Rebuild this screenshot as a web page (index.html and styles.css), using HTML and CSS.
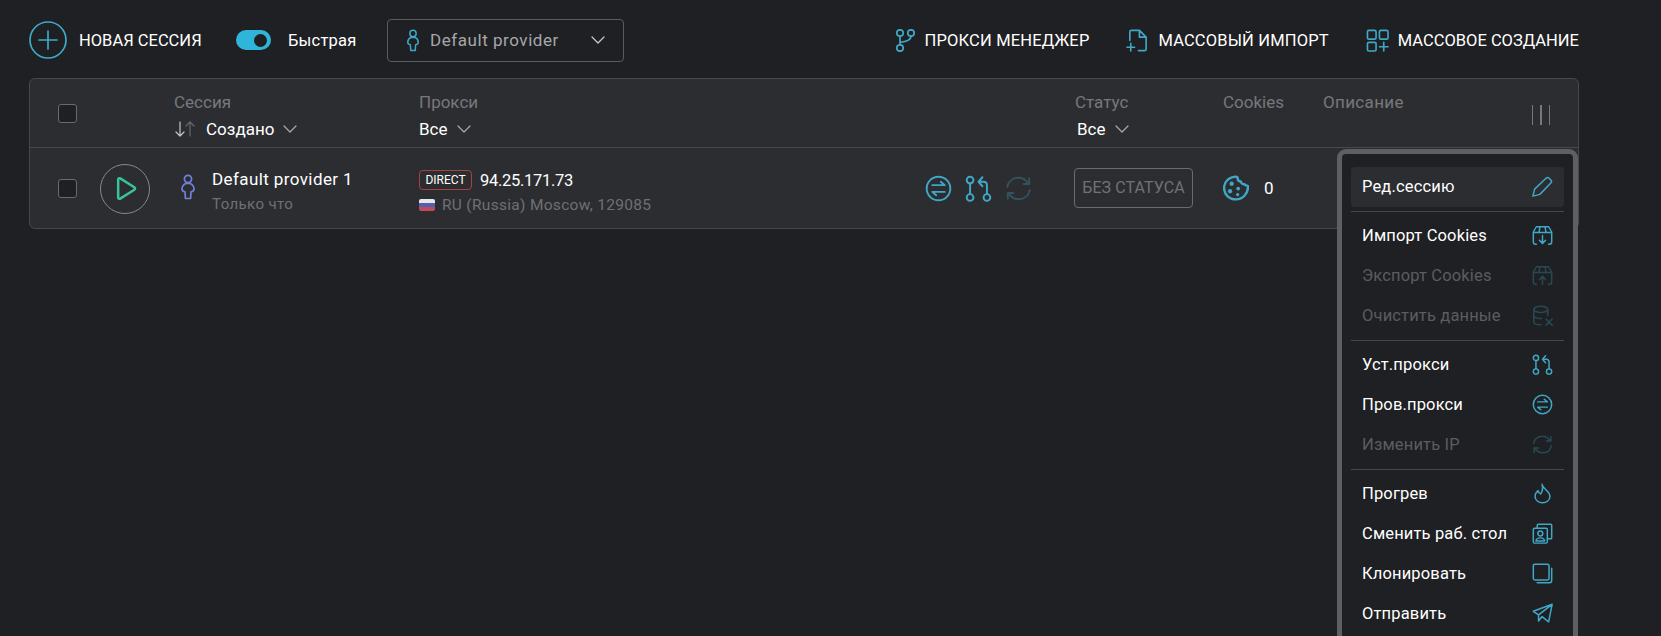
FILE: index.html
```html
<!DOCTYPE html>
<html lang="en">
<head>
    <meta charset="UTF-8">
    <meta name="viewport" content="width=device-width, initial-scale=1.0">
    <title>Sessions</title>
    <link rel="stylesheet" href="styles.css">
</head>
<body>
    <svg class="sprite" width="0" height="0">
        <symbol id="i-person" viewBox="0 0 16 26"><circle cx="8" cy="5" r="3.6"/><path d="M5.6 9.5h4.8c2.2 1.2 3.6 3.4 3.6 5.6 0 1.6-1 2.6-3 2.8l-.4 6.6H5.4L5 17.900c-2-.2-3-1.200-3-2.800 0-2.200 1.400-4.400 3.600-5.600z"/></symbol>
        <symbol id="i-chevron" viewBox="0 0 14 8"><path d="M1 1l6 6 6-6"/></symbol>
        <symbol id="i-check" viewBox="0 0 24 24"><circle cx="12" cy="12" r="10.500"/><path d="M6.500 9h11l-3.500-3M17.500 15h-11l3.500 3"/></symbol>
        <symbol id="i-pull" viewBox="0 0 24 24"><circle cx="4.500" cy="4.500" r="3"/><circle cx="4.500" cy="20" r="3"/><circle cx="19.500" cy="20" r="3"/><path d="M4.500 7.500V17M19.500 17V9c0-2-1-3-3-3H12M15.500 2l-3.500 4 3.500 4"/></symbol>
        <symbol id="i-refresh" viewBox="0 0 24 24"><path d="M2 10.500C3 5.500 7 2.500 12 2.500c3.800 0 6.800 2 8.500 5M22 13.500c-1 5-5 8-10 8-3.800 0-6.800-2-8.500-5"/><path d="M21.500 3v5h-5M2.500 21v-5h5"/></symbol>
        <symbol id="i-box-down" viewBox="0 0 24 24"><path d="M5 22H4c-1.500 0-2.500-1-2.500-2.500V8L5 2h14l3.500 6v11.500c0 1.500-1 2.500-2.500 2.500h-1M1.500 8.500h21M9 2.500L8 8.500M15 2.500l1 6M12 12v9M8.500 17.500L12 21l3.500-3.500"/></symbol>
        <symbol id="i-box-up" viewBox="0 0 24 24"><path d="M5 22H4c-1.500 0-2.500-1-2.500-2.500V8L5 2h14l3.500 6v11.500c0 1.500-1 2.500-2.500 2.500h-1M1.500 8.500h21M9 2.500L8 8.500M15 2.500l1 6M12 22v-9M8.500 16.500L12 13l3.500 3.500"/></symbol>
    </svg>

    <header class="toolbar">
        <div class="toolbar-left">
            <button class="new-session">
                <svg class="icon-plus" viewBox="0 0 38 38"><circle cx="19" cy="19" r="18"/><path d="M19 10v18M10 19h18"/></svg>
                <span>НОВАЯ СЕССИЯ</span>
            </button>
            <div class="toggle"><span class="toggle-knob"></span></div>
            <span class="toggle-label">Быстрая</span>
            <div class="provider-select">
                <svg class="icon-person-sm"><use href="#i-person"/></svg>
                <span class="provider-name">Default provider</span>
                <svg class="chevron chevron-lg"><use href="#i-chevron"/></svg>
            </div>
        </div>
        <nav class="toolbar-right">
            <a class="tool-link link-proxy">
                <svg class="icon" viewBox="0 0 23 23"><circle cx="5" cy="4" r="3.200"/><circle cx="16" cy="4" r="3.200"/><circle cx="5" cy="19" r="3.200"/><path d="M5 7.200V15.800M16 7.200c0 3.800-3.500 5.300-11 6.300"/></svg>
                <span>ПРОКСИ МЕНЕДЖЕР</span>
            </a>
            <a class="tool-link link-import">
                <svg class="icon" viewBox="0 0 24 24"><path d="M4 12V3c0-1 .5-1.500 1.500-1.500H14l7 7V21c0 1-.5 1.500-1.500 1.500H13M14 1.500V8.500h7M5 15v8M1 19h8"/></svg>
                <span>МАССОВЫЙ ИМПОРТ</span>
            </a>
            <a class="tool-link link-create">
                <svg class="icon" viewBox="0 0 24 24"><rect x="1.500" y="1.500" width="9" height="9" rx="1.500"/><rect x="14" y="1.500" width="9" height="9" rx="1.500"/><rect x="1.500" y="14" width="9" height="9" rx="1.500"/><path d="M18.500 14v9M14 18.500h9"/></svg>
                <span>МАССОВОЕ СОЗДАНИЕ</span>
            </a>
        </nav>
    </header>

    <section class="table">
        <div class="grid-row table-head">
            <span class="checkbox"></span>
            <span></span>
            <div class="head-cell">
                <span class="head-title">Сессия</span>
                <div class="head-filter">
                    <svg class="sort-icon" viewBox="0 0 22 16"><path d="M6 1v14M2 11l4 4 4-4"/><path class="sort-off" d="M16 15V1M12 5l4-4 4 4"/></svg>
                    <span>Создано</span>
                    <svg class="chevron"><use href="#i-chevron"/></svg>
                </div>
            </div>
            <div class="head-cell">
                <span class="head-title">Прокси</span>
                <div class="head-filter"><span>Все</span><svg class="chevron"><use href="#i-chevron"/></svg></div>
            </div>
            <div class="head-cell head-status">
                <span class="head-title">Статус</span>
                <div class="head-filter"><span>Все</span><svg class="chevron"><use href="#i-chevron"/></svg></div>
            </div>
            <div class="head-cell"><span class="head-title">Cookies</span></div>
            <div class="head-cell head-last">
                <span class="head-title">Описание</span>
                <div class="columns-btn"><i></i><i></i><i></i></div>
            </div>
        </div>

        <div class="grid-row table-row">
            <span class="checkbox"></span>
            <button class="play">
                <svg viewBox="0 0 20 24"><path d="M2 3.500c0-1.200 1-1.800 2-1.200l13.500 8.500c1 .6 1 1.800 0 2.400L4 21.700c-1 .6-2 0-2-1.200z"/></svg>
            </button>
            <div class="session-cell">
                <svg class="icon-person"><use href="#i-person"/></svg>
                <div>
                    <div class="session-name">Default provider 1</div>
                    <div class="session-time">Только что</div>
                </div>
            </div>
            <div class="proxy-cell">
                <div class="proxy-info">
                    <div class="proxy-top"><span class="badge">DIRECT</span><span class="proxy-ip">94.25.171.73</span></div>
                    <div class="proxy-geo"><span class="flag"></span>RU (Russia) Moscow, 129085</div>
                </div>
                <div class="proxy-actions">
                    <svg class="icon-action"><use href="#i-check"/></svg>
                    <svg class="icon-action"><use href="#i-pull"/></svg>
                    <svg class="icon-action dim"><use href="#i-refresh"/></svg>
                </div>
            </div>
            <div><span class="status-box">БЕЗ СТАТУСА</span></div>
            <div class="cookies-cell">
                <svg class="icon-cookie" viewBox="0 0 24 24"><path d="M12 1.500c1 0 1.500.5 1.500 1.500 0 2 1.500 3 3 3 .3 1.700 1.700 2.800 3.300 2.500.7 1 2.700 1.500 3.200 1.500.6 6.500-4.500 12.500-11 12.500S1 17.800 1 12 6 1.500 12 1.500z"/><circle class="dot" cx="8" cy="8" r="2"/><circle class="dot" cx="6.500" cy="15" r="2"/><circle class="dot" cx="14" cy="12.500" r="1.700"/><circle class="dot" cx="13.500" cy="18" r="1.500"/></svg>
                <span>0</span>
            </div>
            <span></span>
        </div>
    </section>

    <!-- context menu, runs past the bottom of the window -->
    <div class="menu">
        <div class="menu-item active">Ред.сессию
            <svg class="menu-icon" viewBox="0 0 24 24"><path d="M1 23l2-8L16 2.500c1-1 2.500-1 3.500 0l2 2c1 1 1 2.500 0 3.500L9 21z"/></svg>
        </div>
        <hr class="menu-sep">
        <div class="menu-item">Импорт Cookies <svg class="menu-icon"><use href="#i-box-down"/></svg></div>
        <div class="menu-item off">Экспорт Cookies <svg class="menu-icon"><use href="#i-box-up"/></svg></div>
        <div class="menu-item off">Очистить данные
            <svg class="menu-icon" viewBox="0 0 24 24"><ellipse cx="10" cy="5" rx="8" ry="3.500"/><path d="M2 5v14c0 2 3.500 3.500 8 3.500M18 5v7M2 12c0 2 3.500 3.500 9 3.500M16 16l7 7M23 16l-7 7"/></svg>
        </div>
        <hr class="menu-sep">
        <div class="menu-item">Уст.прокси <svg class="menu-icon"><use href="#i-pull"/></svg></div>
        <div class="menu-item">Пров.прокси <svg class="menu-icon"><use href="#i-check"/></svg></div>
        <div class="menu-item off">Изменить IP <svg class="menu-icon"><use href="#i-refresh"/></svg></div>
        <hr class="menu-sep">
        <div class="menu-item">Прогрев
            <svg class="menu-icon" viewBox="0 0 24 24"><path d="M11.500 1.500c0 4.500 9 7.500 9 14 0 4.200-3.800 7-8.500 7s-8.500-2.800-8.500-7c0-3 1.500-5.200 3.500-6.800.3 2 1.300 3.300 3 3.800 1.800-2.500 2.500-7 1.500-11z"/></svg>
        </div>
        <div class="menu-item">Сменить раб. стол
            <svg class="menu-icon" viewBox="0 0 24 24"><rect x="1.500" y="6" width="16" height="17" rx="1.500"/><path d="M6 6V2.500c0-.7.5-1 1-1h14.500c.7 0 1 .4 1 1V17c0 .7-.4 1-1 1h-4"/><circle cx="9.500" cy="12" r="2.800"/><path d="M4.500 20.500c.5-2.500 2.500-3.500 5-3.500s4.500 1 5 3.500z"/></svg>
        </div>
        <div class="menu-item">Клонировать
            <svg class="menu-icon" viewBox="0 0 24 24"><rect x="1.500" y="1.500" width="18" height="18" rx="2"/><path d="M22.500 6v14c0 1.500-1 2.500-2.500 2.500H6"/></svg>
        </div>
        <div class="menu-item">Отправить
            <svg class="menu-icon" viewBox="0 0 24 24"><path d="M23 1.500L1.500 9.500l6 4L23 1.500l-4 20-7.500-6-4 5v-7"/></svg>
        </div>
    </div>
</body>
</html>
```
FILE: styles.css
```css
html, body {
    height: 100%;
    overflow: hidden;
}
body {
    margin: 0;
    position: relative;
    background-color: #1f2023;
    color: #fff;
    font-family: Roboto, "Noto Sans", sans-serif;
    font-size: 16px;
}
.sprite {
    position: absolute;
}
svg {
    display: block;
    flex: none;
    fill: none;
    stroke: #3fa8c6;
    stroke-width: 1.700;
    stroke-linecap: round;
    stroke-linejoin: round;
}

/* toolbar */
.toolbar {
    display: flex;
    justify-content: space-between;
    align-items: center;
    height: 78px;
    padding: 2px 82px 0 29px;
    box-sizing: border-box;
}
.toolbar-left,
.toolbar-right {
    display: flex;
    align-items: center;
}
.new-session {
    display: flex;
    align-items: center;
    gap: 12px;
    width: 207px;
    padding: 0;
    border: none;
    background: none;
    color: #fff;
    font: inherit;
    font-size: 16.500px;
}
.icon-plus {
    width: 38px;
    height: 38px;
}
.toggle {
    display: flex;
    justify-content: flex-end;
    align-items: center;
    width: 35px;
    height: 20px;
    padding-right: 4px;
    box-sizing: border-box;
    border-radius: 10px;
    background-color: #2fb5da;
}
.toggle-knob {
    width: 13px;
    height: 13px;
    border-radius: 50%;
    background-color: #1f2023;
}
.toggle-label {
    width: 99px;
    margin-left: 17px;
    font-size: 16.500px;
    letter-spacing: .2px;
}
.provider-select {
    display: flex;
    align-items: center;
    width: 237px;
    height: 43px;
    padding: 0 18px;
    box-sizing: border-box;
    border: 1px solid #5a5b5f;
    border-radius: 4px;
    color: #a6a7aa;
    font-size: 17px;
}
.icon-person-sm {
    width: 14px;
    height: 23px;
}
.provider-name {
    flex: 1;
    margin-left: 10px;
    letter-spacing: .55px;
}
.chevron {
    width: 14px;
    height: 8px;
    stroke: #a6a7aa;
    stroke-width: 1.300;
}
.chevron-lg {
    stroke: #c8c9cb;
}
.tool-link {
    display: flex;
    align-items: center;
    gap: 9px;
    margin-left: 37px;
    font-size: 16.500px;
}
.tool-link .icon {
    width: 23px;
    height: 23px;
}
.link-proxy,
.link-import {
    letter-spacing: .15px;
}
.link-proxy {
    gap: 7px;
}

/* table */
.table {
    margin: 0 82px 0 29px;
    border: 1px solid #47484c;
    border-radius: 6px;
    background-color: #2c2d31;
}
.grid-row {
    display: grid;
    grid-template-columns: 42px 74px 245px 655px 149px 100px 1fr;
    padding-left: 28px;
}
.table-head {
    height: 68px;
    border-bottom: 1px solid #47484c;
    align-items: center;
}
.table-row {
    height: 80px;
    align-items: center;
}
.checkbox {
    display: block;
    width: 17px;
    height: 17px;
    border: 1px solid #6a6b6f;
    border-radius: 3px;
    background-color: #1f2024;
}
.head-cell {
    align-self: start;
    padding-top: 13px;
}
.head-title {
    display: block;
    color: #77787c;
    font-size: 17px;
    line-height: 20px;
}
.head-filter {
    display: flex;
    align-items: center;
    gap: 9px;
    margin-top: 6px;
    font-size: 17px;
    line-height: 22px;
}
.head-status {
    padding-left: 1px;
}
.head-status .head-filter {
    padding-left: 2px;
}
.sort-icon {
    width: 22px;
    height: 16px;
    margin-right: 1px;
    stroke: #c5c6c8;
    stroke-width: 1.200;
}
.sort-off {
    stroke: #66676b;
}
.head-last {
    display: flex;
    justify-content: space-between;
    padding-right: 28px;
}
.head-last .head-title {
    letter-spacing: .35px;
}
.columns-btn {
    display: flex;
    gap: 7px;
    margin-top: 13px;
}
.columns-btn i {
    width: 1.500px;
    height: 20px;
    background-color: #77787c;
}
.play {
    display: flex;
    justify-content: center;
    align-items: center;
    width: 50px;
    height: 50px;
    margin-top: 1px;
    padding: 0 0 0 2px;
    border: 1px solid #88898c;
    border-radius: 50%;
    background: none;
}
.play svg {
    width: 21px;
    height: 25px;
    stroke: #37c596;
    stroke-width: 2.400;
}
.session-cell {
    display: flex;
    align-items: center;
    gap: 16px;
}
.icon-person {
    width: 16px;
    height: 26px;
    margin: -2px 0 0 6px;
    stroke: #6f80d8;
}
.session-name {
    font-size: 17px;
    line-height: 22px;
    letter-spacing: .4px;
    margin-top: 4px;
}
.session-time {
    margin-top: 5px;
    color: #6f7074;
    font-size: 15px;
    line-height: 18px;
    letter-spacing: .4px;
}
.proxy-cell {
    display: flex;
    justify-content: space-between;
    align-items: center;
    padding-right: 42px;
}
.proxy-info {
    padding-top: 9px;
}
.proxy-top {
    display: flex;
    align-items: center;
}
.badge {
    width: 53px;
    height: 20px;
    margin-right: 8px;
    box-sizing: border-box;
    border: 1px solid #a4443f;
    border-radius: 4px;
    font-size: 12px;
    line-height: 18px;
    text-align: center;
}
.proxy-ip {
    font-size: 16.500px;
    letter-spacing: -.3px;
}
.proxy-geo {
    display: flex;
    align-items: center;
    margin-top: 5px;
    color: #6f7074;
    font-size: 15.500px;
    line-height: 20px;
    letter-spacing: .3px;
}
.flag {
    width: 16px;
    height: 12px;
    margin-right: 7px;
    border-radius: 2px;
    background: linear-gradient(#e8e8ec 33%, #5560a8 33% 66%, #c04a5c 66%);
}
.proxy-actions {
    display: flex;
    align-items: center;
    gap: 13px;
}
.icon-action {
    width: 27px;
    height: 27px;
}
.dim {
    opacity: .3;
}
.status-box {
    display: inline-block;
    width: 119px;
    height: 40px;
    box-sizing: border-box;
    border: 1px solid #6a6b6f;
    border-radius: 4px;
    color: #707175;
    font-size: 16px;
    line-height: 38px;
    letter-spacing: .1px;
    text-align: center;
}
.cookies-cell {
    display: flex;
    align-items: center;
    gap: 15px;
    font-size: 17px;
}
.icon-cookie {
    width: 26px;
    height: 26px;
    stroke-width: 2.200;
}
.icon-cookie .dot {
    fill: #3fa8c6;
    stroke: none;
}

/* context menu */
.menu {
    position: absolute;
    top: 149px;
    left: 1337px;
    width: 241px;
    padding: 13px 9px 13px;
    box-sizing: border-box;
    border: 5px solid #5e5f64;
    border-radius: 9px;
    background-color: #1f2023;
}
.menu-item {
    display: flex;
    justify-content: space-between;
    align-items: center;
    height: 40px;
    padding: 0 11px 2px;
    box-sizing: border-box;
    border-radius: 4px;
    font-size: 16.500px;
    letter-spacing: .15px;
}
.menu-item.active {
    background-color: #2c2d31;
}
.menu-item.off {
    color: #5b5c60;
}
.menu-icon {
    width: 21px;
    height: 21px;
}
.off .menu-icon {
    opacity: .3;
}
.menu-sep {
    height: 1px;
    margin: 4px 0;
    border: none;
    background-color: #47484c;
}
```
